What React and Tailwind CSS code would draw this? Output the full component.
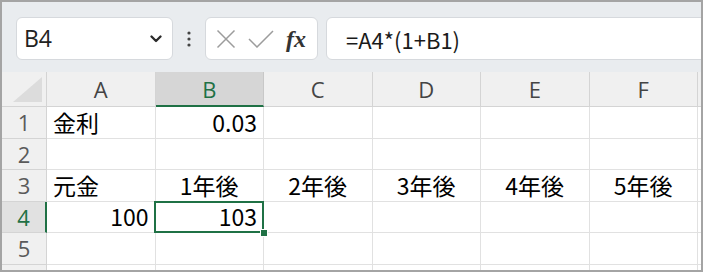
import React from "react";

const cols = ["A", "B", "C", "D", "E", "F"];

const rows = [
  { n: 1, cells: [["金利", "l"], ["0.03", "r"], null, null, null, null] },
  { n: 2, cells: [null, null, null, null, null, null] },
  { n: 3, cells: [["元金", "l"], ["1年後", "c"], ["2年後", "c"], ["3年後", "c"], ["4年後", "c"], ["5年後", "c"]] },
  { n: 4, cells: [["100", "r"], ["103", "r"], null, null, null, null], sel: true },
  { n: 5, cells: [null, null, null, null, null, null] },
  { n: 6, cells: [null, null, null, null, null, null] },
];

const alignCls = { l: "justify-start pl-[6px]", r: "justify-end pr-[6px]", c: "justify-center" };

export default function App() {
  return (
    <div className="w-[705px] h-[274px] bg-white">
      <div className="w-[703px] h-[272px] border-2 border-[#a4a4a4] overflow-hidden flex flex-col">
        {/* toolbar */}
        <div className="h-[70px] shrink-0 bg-[#e9ecef] flex items-start pt-[15px] pl-[14px] overflow-hidden">
          <div className="w-[157px] shrink-0 h-[43px] rounded-[6px] border border-[#d6d9dd] bg-white flex items-center justify-between pl-[7px] pr-[10px]">
            <span className="text-[23px] leading-none text-[#222]" style={{ fontFamily: '"Open Sans", sans-serif' }}>B4</span>
            <svg width="12" height="8" viewBox="0 0 12 8">
              <path d="M1.5 1.5 L6 6 L10.5 1.5" fill="none" stroke="#2b2b2b" strokeWidth="2.3" strokeLinecap="round" strokeLinejoin="round" />
            </svg>
          </div>
          <div className="w-[32px] shrink-0 h-[43px] flex items-center justify-center">
            <svg width="4" height="16" viewBox="0 0 4 16">
              <circle cx="2" cy="2" r="1.6" fill="#444" />
              <circle cx="2" cy="8" r="1.6" fill="#444" />
              <circle cx="2" cy="14" r="1.6" fill="#444" />
            </svg>
          </div>
          <div className="w-[113px] shrink-0 h-[43px] rounded-[6px] border border-[#d6d9dd] bg-white flex items-center pl-[10px]">
            <svg width="20" height="20" viewBox="0 0 20 20" className="mr-[12px] shrink-0">
              <path d="M1.5 1.5 L18.5 18.5 M18.5 1.5 L1.5 18.5" stroke="#9c9c9c" strokeWidth="1.5" fill="none" />
            </svg>
            <svg width="26" height="18" viewBox="0 0 26 18" className="mr-[12px] shrink-0">
              <path d="M1 9 L9 17 L25 1" stroke="#9c9c9c" strokeWidth="1.5" fill="none" />
            </svg>
            <span className="text-[24px] leading-none italic font-bold text-[#333]" style={{ fontFamily: '"Liberation Serif", serif' }}>fx</span>
          </div>
          <div className="ml-[8px] w-[420px] shrink-0 h-[43px] rounded-[6px] border border-[#d6d9dd] bg-white flex items-center pl-[19px]">
            <span className="text-[22px] leading-none text-[#1a1a1a]" style={{ fontFamily: '"Noto Sans CJK JP", sans-serif' }}>=A4*(1+B1)</span>
          </div>
        </div>

        {/* grid */}
        <div className="grid grid-cols-[45px_repeat(6,108.5px)_1fr] grid-rows-[35px_repeat(6,31.5px)] bg-white">
          <div className="bg-[#f0f0f0] border-r border-b border-[#d4d4d4] relative">
            <svg width="30" height="26" viewBox="0 0 30 26" className="absolute right-[3px] bottom-[3px]">
              <path d="M29 0 L29 25 L0 25 Z" fill="#dcdcdc" />
            </svg>
          </div>
          {cols.map((c) => {
            const sel = c === "B";
            return (
              <div
                key={c}
                className={
                  sel
                    ? "bg-[#d6d6d6] border-r border-[#c8c8c8] border-b-2 border-b-[#1f7145] flex items-center justify-center text-[#1f7145]"
                    : "bg-[#f0f0f0] border-r border-b border-[#d4d4d4] flex items-center justify-center text-[#444]"
                }
                style={{ fontFamily: '"Open Sans", sans-serif' }}
              >
                <span className="text-[22px] leading-none">{c}</span>
              </div>
            );
          })}
          <div className="bg-[#f0f0f0] border-b border-[#d4d4d4]" />

          {rows.map((r) => (
            <React.Fragment key={r.n}>
              <div
                className={
                  r.sel
                    ? "bg-[#e1e1e1] border-r-2 border-r-[#1f7145] border-b border-b-[#d4d4d4] flex items-center justify-center text-[#1f7145]"
                    : "bg-[#f0f0f0] border-r border-b border-[#d4d4d4] flex items-center justify-center text-[#5a5a5a]"
                }
                style={{ fontFamily: '"Open Sans", sans-serif' }}
              >
                <span className="text-[22px] leading-none">{r.n}</span>
              </div>
              {r.cells.map((cell, i) => {
                const isSel = r.sel && i === 1;
                return (
                  <div
                    key={i}
                    className={
                      "relative border-r border-b border-[#e1e1e1] flex items-center " +
                      (cell ? alignCls[cell[1]] : "") +
                      (isSel ? " z-10" : "")
                    }
                    style={{ fontFamily: '"Noto Sans CJK JP", sans-serif' }}
                  >
                    {cell && <span className="text-[23px] leading-none text-black">{cell[0]}</span>}
                    {isSel && (
                      <>
                        <div className="absolute left-[-1.5px] top-[-1px] right-[-1px] bottom-[-1px] border-2 border-[#1f7145] pointer-events-none" />
                        <div className="absolute right-[-5px] bottom-[-5px] w-[8px] h-[8px] bg-[#1f7145] border border-white" />
                      </>
                    )}
                  </div>
                );
              })}
              <div className="border-b border-[#e1e1e1]" />
            </React.Fragment>
          ))}
        </div>
      </div>
    </div>
  );
}
